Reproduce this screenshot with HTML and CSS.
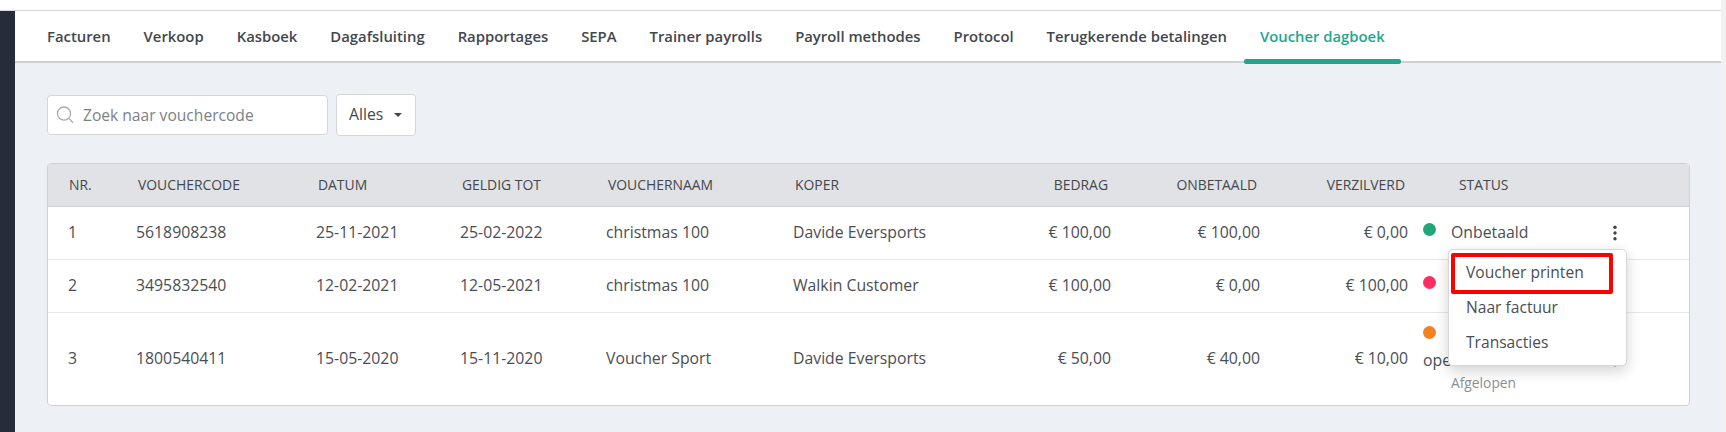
FILE: index.html
```html
<!DOCTYPE html>
<html lang="nl">
<head>
<meta charset="utf-8">
<title>Voucher dagboek</title>
<link rel="stylesheet" href="styles.css">
</head>
<body>
<div class="page">
  <div class="topbar"></div>
  <div class="shell">
    <aside class="sidebar"></aside>
    <main class="main">
      <nav class="tabs">
        <a class="tab">Facturen</a>
        <a class="tab">Verkoop</a>
        <a class="tab">Kasboek</a>
        <a class="tab">Dagafsluiting</a>
        <a class="tab">Rapportages</a>
        <a class="tab">SEPA</a>
        <a class="tab">Trainer payrolls</a>
        <a class="tab">Payroll methodes</a>
        <a class="tab">Protocol</a>
        <a class="tab">Terugkerende betalingen</a>
        <a class="tab active">Voucher dagboek</a>
      </nav>
      <section class="content">
        <div class="filters">
          <label class="search">
            <svg class="search-icon" viewBox="0 0 18 18" width="18" height="18" aria-hidden="true"><circle cx="8" cy="7.6" r="6.6" fill="none" stroke="#a8abaf" stroke-width="1.3"/><path d="M12.8 12.4 L17 16.8" stroke="#a8abaf" stroke-width="1.3" fill="none"/></svg>
            <span class="placeholder">Zoek naar vouchercode</span>
          </label>
          <button class="select">Alles <span class="caret"></span></button>
        </div>
        <div class="card">
          <table class="grid">
            <colgroup>
              <col class="c1"><col class="c2"><col class="c3"><col class="c4"><col class="c5"><col class="c6"><col class="c7"><col class="c8"><col class="c9"><col class="c10"><col class="c11">
            </colgroup>
            <thead>
              <tr>
                <th>Nr.</th><th>Vouchercode</th><th>Datum</th><th>Geldig tot</th><th>Vouchernaam</th><th>Koper</th>
                <th class="num">Bedrag</th><th class="num">Onbetaald</th><th class="num">Verzilverd</th><th class="status-h">Status</th><th></th>
              </tr>
            </thead>
            <tbody>
              <tr>
                <td>1</td><td>5618908238</td><td>25-11-2021</td><td>25-02-2022</td><td>christmas 100</td><td>Davide Eversports</td>
                <td class="num">€ 100,00</td><td class="num">€ 100,00</td><td class="num">€ 0,00</td>
                <td class="status"><span class="dot green"></span><span class="label">Onbetaald</span></td>
                <td class="more"><svg class="kebab" viewBox="0 0 4 16" width="4" height="16" aria-hidden="true"><circle cx="2" cy="2.2" r="1.7"/><circle cx="2" cy="8" r="1.7"/><circle cx="2" cy="13.8" r="1.7"/></svg></td>
              </tr>
              <tr>
                <td>2</td><td>3495832540</td><td>12-02-2021</td><td>12-05-2021</td><td>christmas 100</td><td>Walkin Customer</td>
                <td class="num">€ 100,00</td><td class="num">€ 0,00</td><td class="num">€ 100,00</td>
                <td class="status"><span class="dot red"></span></td>
                <td class="more"><svg class="kebab" viewBox="0 0 4 16" width="4" height="16" aria-hidden="true"><circle cx="2" cy="2.2" r="1.7"/><circle cx="2" cy="8" r="1.7"/><circle cx="2" cy="13.8" r="1.7"/></svg></td>
              </tr>
              <tr class="tall">
                <td>3</td><td>1800540411</td><td>15-05-2020</td><td>15-11-2020</td><td>Voucher Sport</td><td>Davide Eversports</td>
                <td class="num">€ 50,00</td><td class="num">€ 40,00</td><td class="num">€ 10,00</td>
                <td class="status">
                  <div class="line1"><span class="dot orange"></span></div>
                  <div class="line2">open</div>
                  <div class="sub">Afgelopen</div>
                </td>
                <td class="more"><svg class="kebab" viewBox="0 0 4 16" width="4" height="16" aria-hidden="true"><circle cx="2" cy="2.2" r="1.7"/><circle cx="2" cy="8" r="1.7"/><circle cx="2" cy="13.8" r="1.7"/></svg></td>
              </tr>
            </tbody>
          </table>
          <div class="menu">
            <a class="item outlined">Voucher printen</a>
            <a class="item">Naar factuur</a>
            <a class="item">Transacties</a>
          </div>
        </div>
      </section>
    </main>
  </div>
</div>
<div class="scrollbar"></div>
</body>
</html>
```

FILE: styles.css
```css
* { box-sizing: border-box; }
html, body { margin: 0; height: 432px; overflow: hidden; }
body { display: flex; background: #edf0f5; font-family: "Open Sans", sans-serif; color: #44484d; }
.page { flex: 1; min-width: 0; }
.scrollbar { flex: none; width: 5px; background: #f1f1f1; }
.topbar { height: 11px; background: #fff; border-bottom: 1px solid #d5d7db; }
.shell { display: flex; height: 421px; }
.sidebar { width: 15px; background: #242d39; flex: none; }
.main { flex: 1; min-width: 0; }
.tabs { display: flex; height: 52px; padding-left: 16px; gap: 1px; background: #fff; border-bottom: 2px solid #cdd0d8; }
.tab { position: relative; padding: 0 16px; height: 50px; line-height: 50px; font-size: 14.85px; font-weight: 600; color: #42474d; white-space: nowrap; }
.tab.active { color: #1fa68f; }
.tab.active::after { content: ""; position: absolute; left: 0; right: 0; bottom: -3px; height: 5px; background: #1fa68f; border-radius: 2px; }
.content { padding: 31px 31px 0 32px; }
.filters { display: flex; align-items: center; gap: 8px; margin-bottom: 27px; }
.search { display: flex; align-items: center; width: 281px; height: 40px; padding-left: 8px; gap: 9px; background: #fff; border: 1px solid #d3d6db; border-radius: 4px; }
.search-icon { flex: none; }
.placeholder { font-size: 15.6px; color: #7c8187; }
.select { display: flex; align-items: center; gap: 11px; width: 80px; height: 42px; padding: 0 0 2px 12px; background: #fff; border: 1px solid #d3d6db; border-radius: 4px; font: 15.8px "Open Sans", sans-serif; color: #44484d; }
.caret { width: 0; height: 0; margin-top: 2px; border-left: 4.5px solid transparent; border-right: 4.5px solid transparent; border-top: 4px solid #44484d; }
.card { position: relative; background: #fff; border: 1px solid #ced1d6; border-radius: 4px; height: 243px; }
.grid { width: 100%; border-collapse: collapse; table-layout: fixed; }
.c1 { width: 68px; } .c2 { width: 180px; } .c3 { width: 144px; } .c4 { width: 146px; } .c5 { width: 187px; }
.c6 { width: 220px; } .c7 { width: 118px; } .c8 { width: 149px; } .c9 { width: 148px; } .c10 { width: 192px; } .c11 { width: auto; }
th { height: 42px; padding: 0 0 0 22px; background: #e0e2e6; border-bottom: 1px solid #cdd0d5; font-size: 13.9px; font-weight: 400; text-transform: uppercase; text-align: left; color: #44484d; white-space: nowrap; }
th:first-child { padding-left: 21px; }
td { height: 53px; padding: 0 0 1px 20px; border-bottom: 1px solid #e6e8eb; font-size: 15.8px; white-space: nowrap; color: #4a4e54; }
tbody tr:last-child td { border-bottom: 0; }
tr.tall td { height: 93px; }
th.num { padding: 0 3px 0 0; text-align: right; }
td.num { padding-left: 0; text-align: right; }
th.status-h { padding-left: 51px; }
td.status { padding-left: 15px; }
tr.tall td.status { vertical-align: top; padding-top: 10px; }
.dot { display: inline-block; width: 13px; height: 13px; border-radius: 50%; margin-right: 15px; vertical-align: 2px; }
.green { background: #21a67a; } .red { background: #ff2d64; } .orange { background: #f58220; }
.line1 { line-height: 24px; height: 23px; }
.line2 { line-height: 28px; }
.sub { margin-left: 28px; font-size: 13.8px; color: #8b8f94; line-height: 18px; }
td.more { padding: 0; }
.kebab { display: block; fill: #3f444a; margin-left: 13px; }
.menu { position: absolute; left: 1400px; top: 85px; width: 179px; height: 117px; padding: 5px 13px 0 2px; background: #fff; border: 1px solid #d5d7db; border-radius: 5px; box-shadow: 0 5px 14px rgba(0,0,0,.18); }
.item { display: block; position: relative; height: 35px; line-height: 35px; padding-left: 15px; font-size: 15.6px; color: #4a4e54; white-space: nowrap; }
.item.outlined::after { content: ""; position: absolute; left: 0; right: 0; top: -2px; bottom: -4px; border: 4px solid #ff0000; border-radius: 2px; }
```
